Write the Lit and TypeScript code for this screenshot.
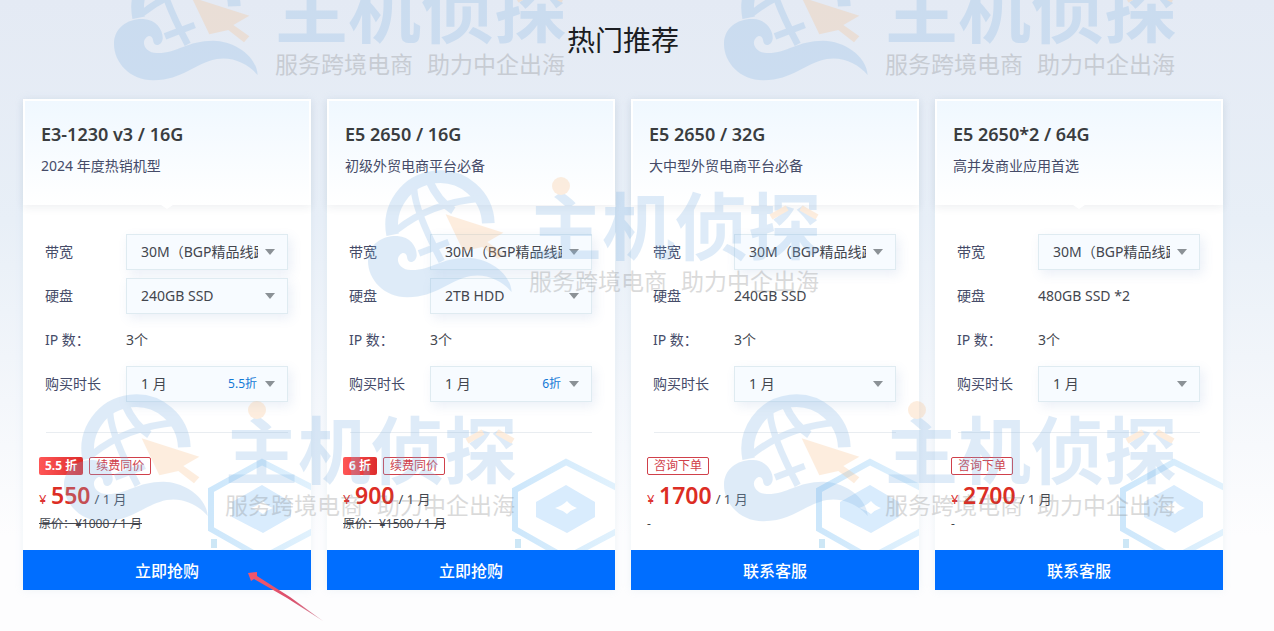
import { LitElement, html, css, svg, nothing } from "lit";
import { customElement, property } from "lit/decorators.js";

interface Row {
  label: string;
  value: string;
  select?: boolean;
  off?: string;
}

interface Plan {
  id: string;
  name: string;
  note: string;
  rows: Row[];
  discount?: string;
  tag: string;
  price: string;
  original: string;
  action: string;
  notch: boolean;
}

const BANDWIDTH = "30M（BGP精品线路）";

const plan = (
  id: string,
  name: string,
  note: string,
  disk: Row,
  off: string,
  discount: string,
  tag: string,
  price: string,
  original: string,
  action: string,
  notch = false
): Plan => ({
  id,
  name,
  note,
  discount,
  tag,
  price,
  original,
  action,
  notch,
  rows: [
    { label: "带宽", value: BANDWIDTH, select: true },
    disk,
    { label: "IP 数：", value: "3个" },
    { label: "购买时长", value: "1 月", select: true, off },
  ],
});

const PLANS: Plan[] = [
  plan("a", "E3-1230 v3 / 16G", "2024 年度热销机型", { label: "硬盘", value: "240GB SSD", select: true }, "5.5折", "5.5 折", "续费同价", "550", "原价：¥1000 / 1 月", "立即抢购", true),
  plan("b", "E5 2650 / 16G", "初级外贸电商平台必备", { label: "硬盘", value: "2TB HDD", select: true }, "6折", "6 折", "续费同价", "900", "原价：¥1500 / 1 月", "立即抢购"),
  plan("c", "E5 2650 / 32G", "大中型外贸电商平台必备", { label: "硬盘", value: "240GB SSD" }, "", "", "咨询下单", "1700", "", "联系客服"),
  plan("d", "E5 2650*2 / 64G", "高并发商业应用首选", { label: "硬盘", value: "480GB SSD *2" }, "", "", "咨询下单", "2700", "", "联系客服", true),
];

@customElement("plan-card")
export class PlanCard extends LitElement {
  @property({ attribute: false }) plan!: Plan;

  static styles = css`
    :host {
      display: flex;
      flex-direction: column;
      background: #fff;
      box-shadow: 0 0 8px rgba(160, 195, 220, 0.16);
      color: #43464e;
      font-size: 14px;
    }
    .head {
      position: relative;
      padding: 22px 16px 30px;
      background: linear-gradient(#f0f8ff, #fff);
      border: 2px solid #fff;
      border-bottom: 0;
      box-shadow: 0 3px 8px rgba(40, 60, 90, 0.07);
    }
    .notch::after {
      content: "";
      position: absolute;
      left: 50%;
      top: 100%;
      margin-left: -6px;
      border: 6px solid transparent;
      border-top: 4px solid #fff;
      border-bottom: 0;
    }
    .name {
      margin: 0;
      font-size: 18px;
      line-height: 22px;
      font-weight: 600;
      color: #3a3d40;
    }
    .note {
      margin: 12px 0 0;
      line-height: 18px;
      color: #454b68;
    }
    .body {
      flex: 1;
      position: relative;
      padding: 25px 16px 18px;
    }
    .hex {
      position: absolute;
      right: 0;
      bottom: 0;
      width: 104px;
      height: 94px;
    }
    .row {
      display: grid;
      grid-template-columns: 81px 162px;
      align-items: center;
      height: 44px;
      line-height: 20px;
      padding-left: 6px;
    }
    .label {
      color: #454b68;
    }
    .box {
      position: relative;
      display: grid;
      align-items: center;
    }
    .select {
      box-sizing: border-box;
      width: 100%;
      height: 36px;
      appearance: none;
      border: 1px solid #dfebf1;
      border-radius: 0;
      background: #f7fbff;
      box-shadow: 3px 4px 12px rgba(80, 120, 190, 0.12);
      padding: 0 29px 0 14px;
      font: inherit;
      color: inherit;
      text-overflow: clip;
    }
    .off {
      position: absolute;
      right: 31px;
      font-size: 12px;
      color: #1379d6;
      pointer-events: none;
    }
    .caret {
      position: absolute;
      right: 13px;
      border: 5px solid transparent;
      border-top: 6px solid #8b9196;
      border-bottom: 0;
      pointer-events: none;
    }
    .rule {
      border: 0;
      border-top: 1px solid #e9edf1;
      margin: 26px 7px 24px;
    }
    .tags {
      display: flex;
      gap: 6px;
      height: 18px;
    }
    .discount,
    .tag {
      box-sizing: border-box;
      height: 18px;
      line-height: 16px;
      padding: 0 6px;
      border: 1px solid #d0404a;
      border-radius: 2px;
      font-size: 12px;
      color: #d0404a;
    }
    .discount {
      border: 0;
      line-height: 18px;
      background: linear-gradient(90deg, #ff5656, #dd2c2c);
      color: #fff;
      font-weight: 700;
    }
    .price {
      display: flex;
      align-items: baseline;
      height: 24px;
      line-height: 24px;
      margin-top: 8px;
      font-size: 13px;
    }
    .yen {
      width: 12px;
      color: #d33;
    }
    .amount {
      margin-right: 4px;
      font-size: 23px;
      font-weight: 600;
      color: #dc2d24;
    }
    .original {
      font-size: 12px;
      line-height: 16px;
      margin-top: 9px;
    }
    .buy {
      height: 40px;
      padding: 0;
      border: 0;
      background: #006eff;
      color: #fff;
      font: inherit;
      font-size: 16px;
      font-weight: 500;
    }
  `;

  private control(row: Row, index: number) {
    if (!row.select) return html`<span class="label">${row.label}</span><span>${row.value}</span>`;
    const id = `${this.plan.id}-${index}`;
    return html`
      <label class="label" for=${id}>${row.label}</label>
      <span class="box">
        <select class="select" id=${id}><option>${row.value}</option></select>
        ${row.off ? html`<span class="off">${row.off}</span>` : nothing}
        <span class="caret"></span>
      </span>
    `;
  }

  render() {
    const p = this.plan;
    return html`
      <header class="head ${p.notch ? "notch" : ""}">
        <h3 class="name">${p.name}</h3>
        <p class="note">${p.note}</p>
      </header>
      <div class="body">
        <svg class="hex" viewBox="0 0 104 94" fill="none" aria-hidden="true">
          <defs>
            <linearGradient id="edge">
              <stop stop-color="#cde7fb" />
              <stop offset="1" stop-color="#e2f2fd" />
            </linearGradient>
          </defs>
          <path d="M110 34 55 6 4 34V73L55 102 110 73" stroke="url(#edge)" stroke-width="6" />
          <path d="M55 29 84 46V61L56 77 25 61V46Z" fill="#d9ecfd" />
          <path d="M56 45Q60 50 66 52 60 54 56 58 51 54 44 52 51 50 56 45Z" fill="#fff" />
          <path d="M4 83h6v9h-6z" fill="#cde7f6" />
        </svg>
        ${p.rows.map((r, i) => html`<div class="row">${this.control(r, i)}</div>`)}
        <hr class="rule" />
        <div class="tags">
          ${p.discount ? html`<span class="discount">${p.discount}</span>` : nothing}
          <span class="tag">${p.tag}</span>
        </div>
        <div class="price">
          <span class="yen">¥</span><strong class="amount">${p.price}</strong><span>/ 1 月</span>
        </div>
        <div class="original">${p.original ? html`<s>${p.original}</s>` : "-"}</div>
      </div>
      <button class="buy">${p.action}</button>
    `;
  }
}

const MARKS = [[50, -441], [660, -441], [304, -224], [0, 0], [660, 0]];

@customElement("app-root")
export class AppRoot extends LitElement {
  static styles = css`
    :host {
      display: block;
      position: relative;
      box-sizing: border-box;
      min-height: 100vh;
      padding: 20px 51px 41px 23px;
      overflow: hidden;
      background: linear-gradient(#e4eaf4, #e8eff7 35%, #fdfdfe 85%);
      font-family: "Noto Sans", "Noto Sans CJK SC", sans-serif;
    }
    .title {
      margin: 0 0 39px;
      text-align: center;
      font-size: 28px;
      line-height: 40px;
      font-weight: 400;
      color: #1b1d22;
    }
    .plans {
      display: grid;
      grid-template-columns: repeat(4, 1fr);
      gap: 16px;
    }
    .overlay {
      position: absolute;
      left: 0;
      top: 0;
      width: 100%;
      height: 100%;
      pointer-events: none;
    }
  `;

  private mark(x: number, y: number) {
    return svg`
      <g transform="translate(${x} ${y})" opacity="0.25">
        <g transform="translate(60 390) scale(0.3333)">
          <g fill="none" stroke="#7fb3e4">
            <path d="M86 206A145 145 0 1 1 373 172" stroke-width="38" />
            <path d="M98 192Q200 110 350 97" stroke-width="20" />
            <path d="M150 70Q155 140 233 286" stroke-width="20" />
            <path d="M196 45Q222 105 268 134" stroke-width="24" />
            <path d="M165 262 254 228" stroke-width="20" />
          </g>
          <path fill="#7fb3e4" d="M100 210C140 212 160 245 158 270 155 292 130 295 129 272 127 260 116 257 108 266 92 282 108 312 140 312 200 314 230 275 310 275 370 275 440 320 443 378 415 345 370 322 320 330 250 345 220 392 130 394 60 394 12 340 12 285 12 235 55 208 100 210Z" />
          <path fill="#fabb7f" d="M245 145 418 200 370 228 418 262 402 280 355 243 298 256Z" />
        </g>
        <text x="225" y="478" font-size="73" font-weight="700" fill="#7fb3e4">主机侦探</text>
        <circle cx="257" cy="410" r="9" fill="#fabb7f" />
        <path d="M467 441 483 432M497 432 513 441" stroke="#fabb7f" stroke-width="6" />
        <text x="225" y="514" font-size="23" fill="#707070">服务跨境电商</text>
        <text x="377" y="514" font-size="23" fill="#707070">助力中企出海</text>
      </g>`;
  }

  render() {
    return html`
      <h2 class="title">热门推荐</h2>
      <div class="plans">${PLANS.map((p) => html`<plan-card .plan=${p}></plan-card>`)}</div>
      <svg class="overlay" aria-hidden="true">
        <defs>
          <linearGradient id="fade">
            <stop stop-color="#f5566a" />
            <stop offset="0.6" stop-color="#d9506c" />
            <stop offset="1" stop-color="#d9a0b0" />
          </linearGradient>
        </defs>
        ${MARKS.map(([x, y]) => this.mark(x, y))}
        <path d="M248 573 257 572 257 576 290 597 323 621 287 598 254 579 251 581Z" fill="url(#fade)" />
      </svg>
    `;
  }
}
